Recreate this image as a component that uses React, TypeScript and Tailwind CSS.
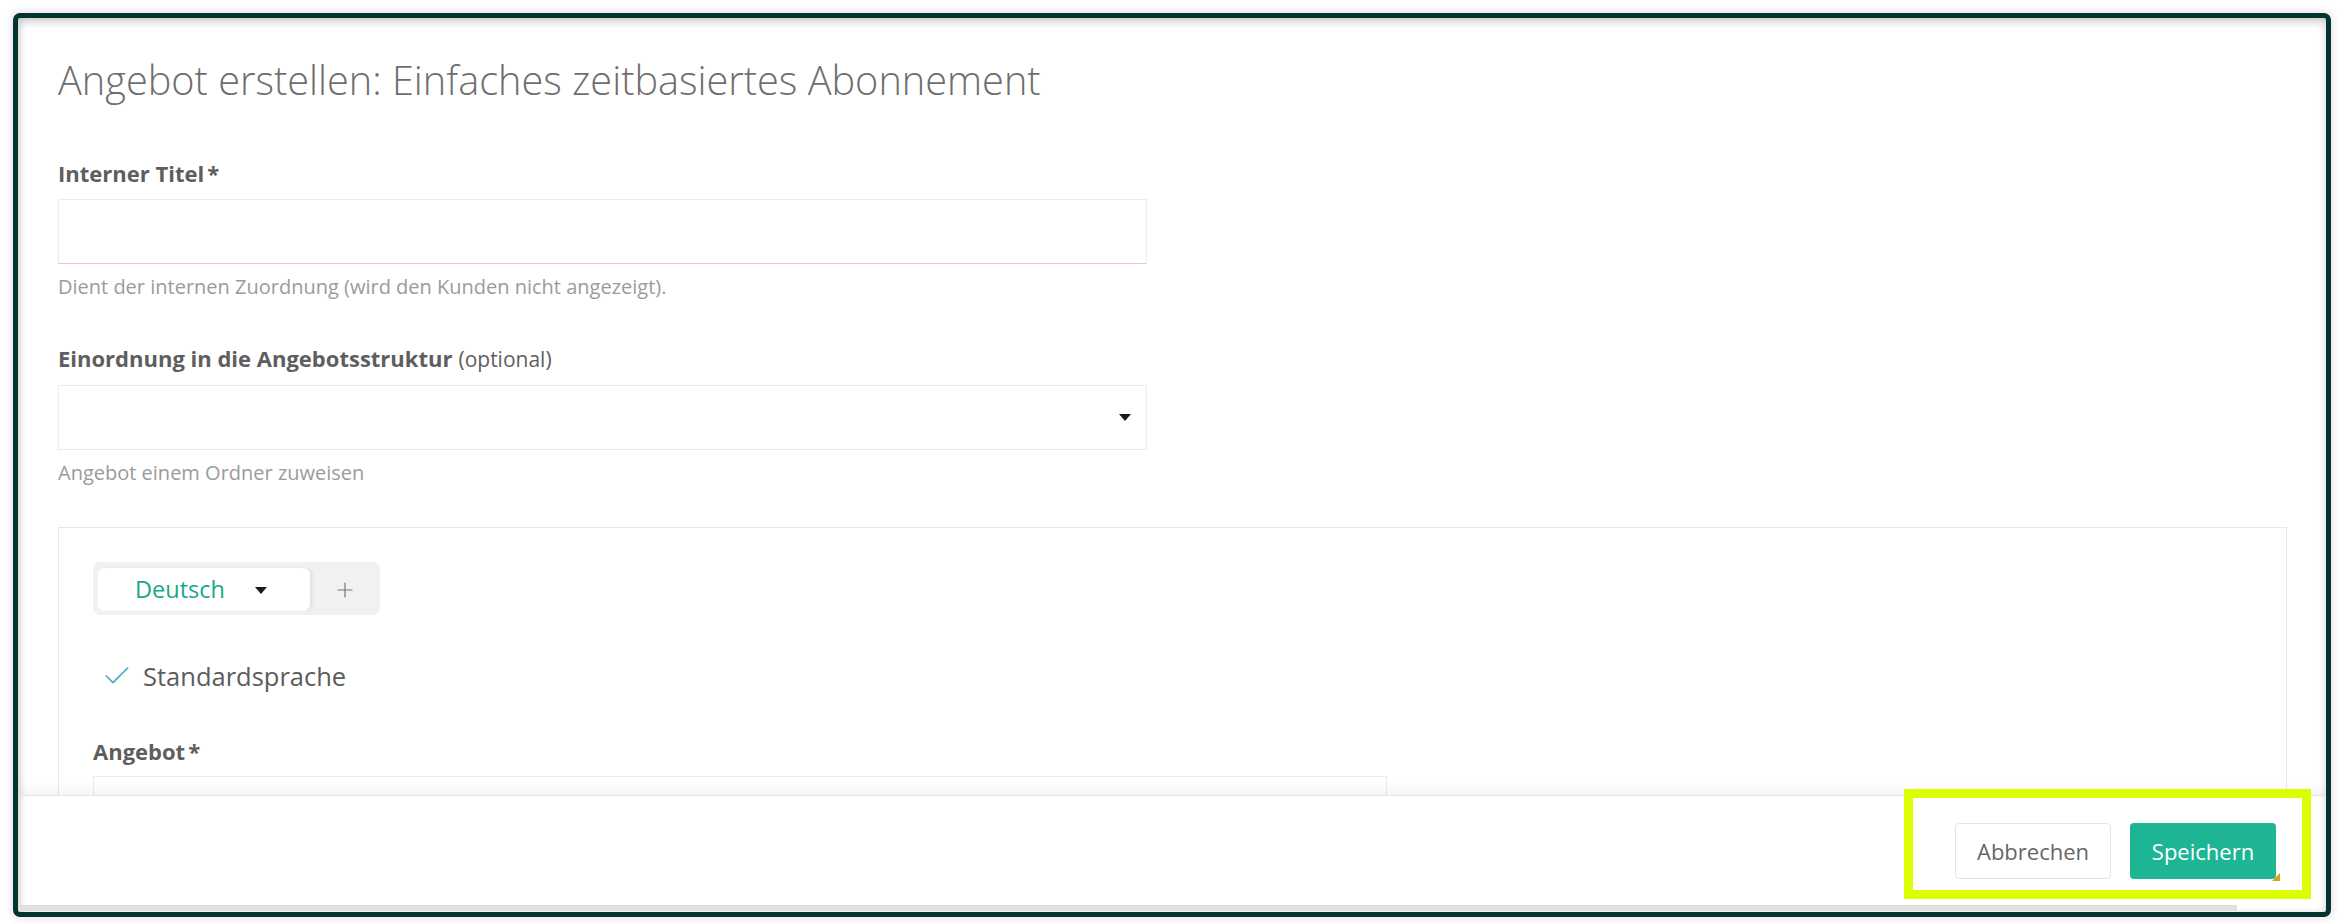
import { Check, Plus } from "lucide-react";

const font = "font-['Open_Sans','Noto_Sans',sans-serif]";

function Caret({ className = "" }: { className?: string }) {
  return (
    <svg width="12" height="7" viewBox="0 0 12 7" className={className}>
      <path d="M0 0h12L6 7z" fill="#1a1a1a" />
    </svg>
  );
}

function Label({ text, extra, star }: { text: string; extra?: string; star?: boolean }) {
  return (
    <div className="h-[26px] text-[22px] leading-[26px] text-[#5e5e5e]">
      <span className="font-bold">{text}</span>
      {star && <span className="ml-[3px] font-bold">*</span>}
      {extra && <span className="ml-[6px] text-[21px] font-normal">{extra}</span>}
    </div>
  );
}

function Help({ text }: { text: string }) {
  return <div className="mt-[11px] h-[24px] text-[20px] leading-[24px] text-[#9b9b9b]">{text}</div>;
}

export default function App() {
  return (
    <div className={`min-h-screen bg-white pl-[13px] pt-[13px] ${font}`}>
      <div className="relative flex h-[904px] w-[2318px] flex-col overflow-hidden rounded-[7px] border-[5px] border-[#053430] bg-white shadow-[0_0_8px_2px_rgba(0,0,0,0.10),inset_0_4px_8px_rgba(0,0,0,0.18),inset_3px_0_6px_rgba(0,0,0,0.08)]">
        {/* scrollable content */}
        <div className="h-[777px] shrink-0 overflow-hidden pl-[40px] pr-[39px] pt-[38px]">
          <h1 className="h-12 text-[39.7px] font-light leading-[48px] text-[#6e6e6e]">
            Angebot erstellen: Einfaches zeitbasiertes Abonnement
          </h1>

          <div className="mt-[56px]">
            <Label text="Interner Titel" star />
            <div className="mt-[13px] h-[65px] w-[1089px] border border-[#ececec] border-b-[#f3c4c4] bg-white" />
            <Help text="Dient der internen Zuordnung (wird den Kunden nicht angezeigt)." />
          </div>

          <div className="mt-[46px]">
            <Label text="Einordnung in die Angebotsstruktur" extra="(optional)" />
            <div className="mt-[14px] flex h-[65px] w-[1089px] items-center justify-end border border-[#ececec] bg-white pr-[15px]">
              <Caret />
            </div>
            <Help text="Angebot einem Ordner zuweisen" />
          </div>

          <div className="mt-[42px] h-[400px] border border-[#e8e8e8] pl-[34px] pt-[34px]">
            <div className="flex h-[53px] w-[287px] rounded-[7px] bg-[#f1f1f1] pb-[4px] pl-[5px] pt-[6px]">
              <div className="flex w-[212px] items-center rounded-[7px] bg-white pl-[37px] shadow-[3px_0_3px_rgba(0,0,0,0.06)]">
                <span className="text-[23.5px] font-medium text-[#1aa889]">Deutsch</span>
                <Caret className="ml-[30px] mt-[2px]" />
              </div>
              <div className="flex flex-1 items-center justify-center">
                <Plus size={24} strokeWidth={1.2} className="text-[#777]" />
              </div>
            </div>

            <div className="mt-[46px] flex h-[30px] items-center pl-[8px]">
              <Check size={32} strokeWidth={1.3} className="text-[#46aebd]" />
              <span className="ml-[10px] text-[25.5px] leading-[30px] text-[#5c5c5c]">Standardsprache</span>
            </div>

            <div className="mt-[47px]">
              <Label text="Angebot" star />
              <div className="mt-[12px] h-[65px] w-[1294px] border border-[#ececec] bg-white" />
            </div>
          </div>
        </div>

        {/* footer */}
        <div className="relative flex h-[110px] shrink-0 items-start justify-end gap-[19px] border-t border-[#e6e6e6] pr-[50px] pt-[27px] shadow-[0_-5px_10px_rgba(0,0,0,0.05)]">
          <button className="h-[56px] w-[156px] rounded-[4px] border border-[#e4e4e4] bg-white text-[22px] text-[#666]">
            Abbrechen
          </button>
          <button className="relative h-[56px] w-[146px] rounded-[4px] bg-[#1db594] text-[22px] font-medium text-white">
            Speichern
            <svg width="8" height="8" viewBox="0 0 8 8" className="absolute -bottom-[2px] -right-[4px]">
              <path d="M8 0v8H0z" fill="#d9a11a" />
            </svg>
          </button>
        </div>

        {/* horizontal scrollbar */}
        <div className="h-[6px] w-[2219px] shrink-0 bg-[#e0e0e0]" />

        {/* highlight annotation */}
        <div className="pointer-events-none absolute left-[1886px] top-[771px] h-[110px] w-[407px] border-[9px] border-[#dbff00]" />
      </div>
    </div>
  );
}
